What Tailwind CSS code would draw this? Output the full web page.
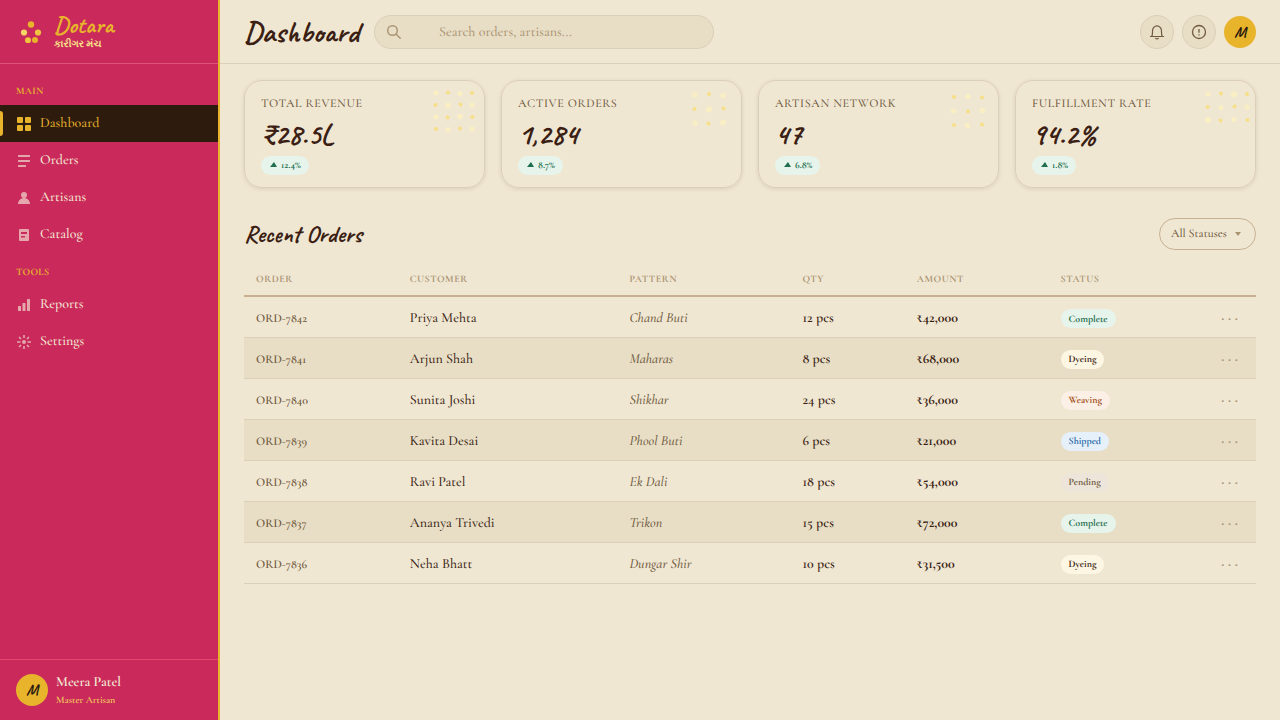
<!DOCTYPE html>
<html lang="en">
<head>
<meta charset="utf-8">
<meta name="viewport" content="width=device-width, initial-scale=1">
<title>Dotara – Dashboard</title>
<script src="https://cdn.jsdelivr.net/npm/@tailwindcss/browser@4"></script>
</head>
<body class="flex h-screen bg-[#f0e7d3] font-['Cormorant_Garamond','Liberation_Serif',serif] font-medium text-[#3b1f14] [text-rendering:geometricPrecision]">

<aside class="flex w-[220px] shrink-0 flex-col border-r-2 border-[#e8b42c] bg-[#c92a5b]">
  <div class="flex h-16 shrink-0 items-center gap-3 border-b border-[#dd5377] pl-5">
    <svg class="size-[22px]" viewBox="0 0 22 22" aria-hidden="true">
      <circle cx="11" cy="3.500" r="3.200" fill="#e8b42c"/>
      <circle cx="4" cy="11.500" r="3.100" fill="#f5d563"/>
      <circle cx="18" cy="11.500" r="3.100" fill="#efc440"/>
      <circle cx="8" cy="19.300" r="3" fill="#efc440"/>
      <circle cx="15" cy="19" r="3" fill="#e8b42c"/>
    </svg>
    <div>
      <p class="font-['Caveat',cursive] text-2xl font-bold leading-6 text-[#e8b42c]">Dotara</p>
      <p class="text-[10px] font-semibold leading-3 text-[#fbe38a]" lang="gu">કારીગર મંચ</p>
    </div>
  </div>

  <nav class="flex-1" aria-label="Main">
    <h2 class="px-4 pt-[19px] pb-1.5 text-[10px] font-bold leading-4 tracking-wide text-[#e8b42c]">MAIN</h2>
    <a href="#" aria-current="page" class="relative flex h-[37px] items-center gap-2 bg-[#2d1b0e] px-4 text-sm leading-[21px] text-[#e8b42c]">
      <span class="absolute top-1.5 left-0 h-[25px] w-[3px] rounded-r-sm bg-[#e8b42c]"></span>
      <svg class="size-4" viewBox="0 0 16 16" fill="currentColor" aria-hidden="true"><rect x="1" y="1" width="6" height="6" rx="1"/><rect x="9" y="1" width="6" height="6" rx="1"/><rect x="1" y="9" width="6" height="6" rx="1"/><rect x="9" y="9" width="6" height="6" rx="1"/></svg>
      Dashboard
    </a>
    <a href="#" class="flex h-[37px] items-center gap-2 px-4 text-sm leading-[21px] text-[#f5ead6]">
      <svg class="size-4 opacity-65" viewBox="0 0 16 16" fill="currentColor" aria-hidden="true"><rect x="2" y="2" width="12" height="2" rx=".5"/><rect x="2" y="7" width="12" height="2" rx=".5"/><rect x="2" y="12" width="8" height="2" rx=".5"/></svg>
      Orders
    </a>
    <a href="#" class="flex h-[37px] items-center gap-2 px-4 text-sm leading-[21px] text-[#f5ead6]">
      <svg class="size-4 opacity-65" viewBox="0 0 16 16" fill="currentColor" aria-hidden="true"><circle cx="8" cy="5" r="3"/><path d="M2 14c0-3.300 2.700-6 6-6s6 2.700 6 6z"/></svg>
      Artisans
    </a>
    <a href="#" class="flex h-[37px] items-center gap-2 px-4 text-sm leading-[21px] text-[#f5ead6]">
      <svg class="size-4 opacity-65" viewBox="0 0 16 16" fill="currentColor" fill-rule="evenodd" aria-hidden="true"><path d="M4 2h8a1 1 0 0 1 1 1v10a1 1 0 0 1-1 1H4a1 1 0 0 1-1-1V3a1 1 0 0 1 1-1zM5 5v2h6V5zM5 9v1.500h4V9z"/></svg>
      Catalog
    </a>
    <h2 class="px-4 pt-[11px] pb-1.5 text-[10px] font-bold leading-4 tracking-wide text-[#e8b42c]">TOOLS</h2>
    <a href="#" class="flex h-[37px] items-center gap-2 px-4 text-sm leading-[21px] text-[#f5ead6]">
      <svg class="size-4 opacity-65" viewBox="0 0 16 16" fill="currentColor" aria-hidden="true"><rect x="2" y="9" width="3" height="5" rx=".5"/><rect x="6.500" y="6" width="3" height="8" rx=".5"/><rect x="11" y="2" width="3" height="12" rx=".5"/></svg>
      Reports
    </a>
    <a href="#" class="flex h-[37px] items-center gap-2 px-4 text-sm leading-[21px] text-[#f5ead6]">
      <svg class="size-4 opacity-65" viewBox="0 0 16 16" fill="none" stroke="currentColor" stroke-width="1.600" aria-hidden="true"><circle cx="8" cy="8" r="2" fill="currentColor" stroke="none"/><path d="M8 1v3M8 12v3M1 8h3.500M11.500 8H15M3 3l2 2M11 11l2 2M3 13l2-2M11 5l2-2"/></svg>
      Settings
    </a>
  </nav>

  <div class="flex h-[61px] items-center gap-2 border-t border-[#e0486f] px-4">
    <span class="flex size-8 items-center justify-center rounded-full bg-[#e8b42c] font-['Caveat',cursive] text-base font-bold text-[#2d1b0e]">M</span>
    <div class="pt-0.5">
      <p class="text-sm font-semibold leading-[18px] text-[#f5ead6]">Meera Patel</p>
      <p class="text-[10px] font-semibold leading-4 text-[#f5cf5a]">Master Artisan</p>
    </div>
  </div>
</aside>

<div class="flex min-w-0 flex-1 flex-col">
  <header class="flex h-16 shrink-0 items-center gap-3 border-b border-[#ddd0ba] px-6">
    <h1 class="min-w-[118px] font-['Caveat',cursive] text-3xl font-bold">Dashboard</h1>
    <div class="relative w-[340px]">
      <svg class="absolute top-[9px] left-3 size-4 text-[#ab9574]" viewBox="0 0 16 16" fill="none" stroke="currentColor" stroke-width="1.500" stroke-linecap="round" aria-hidden="true"><circle cx="6.500" cy="6.500" r="4.800"/><path d="M10.200 10.200l4 4"/></svg>
      <input type="search" aria-label="Search" placeholder="Search orders, artisans..." class="block h-[34px] w-full rounded-full border border-[#dccfb8] bg-[#e8dec6] pt-0.5 pr-4 pl-16 text-sm outline-none placeholder:text-[#ab9574] [text-rendering:geometricPrecision]">
    </div>
    <div class="ml-auto flex items-center gap-2">
      <button type="button" aria-label="Notifications" class="flex size-[34px] items-center justify-center rounded-full border border-[#dccfb8] bg-[#e8dec6] text-[#6f5a40]">
        <svg class="size-4" viewBox="0 0 16 16" fill="none" stroke="currentColor" stroke-width="1.200" stroke-linecap="round" aria-hidden="true"><path d="M1.500 12.500h13M2.800 12.300C3.600 11 3.500 9.500 3.500 7a4.500 5.200 0 0 1 9 0c0 2.500-.1 4 .7 5.300M6.700 14.300a1.500 1.100 0 0 0 2.600 0"/></svg>
      </button>
      <button type="button" aria-label="Alerts" class="flex size-[34px] items-center justify-center rounded-full border border-[#dccfb8] bg-[#e8dec6] text-[#6f5a40]">
        <svg class="size-4" viewBox="0 0 16 16" fill="none" stroke="currentColor" stroke-width="1.300" aria-hidden="true"><circle cx="8" cy="8" r="6.500"/><path d="M8 5v3.800M8 10.300v1.300"/></svg>
      </button>
      <button type="button" aria-label="Account" class="flex size-8 items-center justify-center rounded-full bg-[#e8b42c] font-['Caveat',cursive] text-base font-bold text-[#2d1b0e]">M</button>
    </div>
  </header>

  <main class="flex-1 overflow-auto px-6 pt-4">
    <section class="grid grid-cols-4 gap-4" aria-label="Key figures">
      <article class="relative rounded-[18px] border border-[#dccfb8] px-4 py-3 shadow-[0_1px_4px_rgba(59,31,20,0.12)]">
        <svg class="absolute top-0 right-0 h-[60px] w-[60px]" viewBox="0 0 60 60" aria-hidden="true">
          <g fill="#faefc2"><circle cx="12" cy="12" r="2.500"/><circle cx="36" cy="12.500" r="2.500"/><circle cx="24" cy="24.500" r="2.800"/><circle cx="48" cy="24" r="2.500"/><circle cx="12" cy="36" r="2.500"/><circle cx="36" cy="35.500" r="2.800"/><circle cx="24" cy="48.500" r="2.500"/><circle cx="48" cy="48" r="2.500"/></g>
          <g fill="#f7df87"><circle cx="24" cy="11.500" r="2"/><circle cx="48" cy="12" r="2"/><circle cx="11.500" cy="24" r="2"/><circle cx="36.500" cy="23.500" r="2"/><circle cx="23.500" cy="36.500" r="2"/><circle cx="48.500" cy="36" r="2"/><circle cx="12" cy="48" r="2"/><circle cx="36" cy="47.500" r="2"/></g>
        </svg>
        <h2 class="text-xs leading-[22px] tracking-wider text-[#6f5a40]">TOTAL REVENUE</h2>
        <p class="font-['Caveat',cursive] text-3xl font-bold leading-[38px]">₹28.5L</p>
        <p class="mt-[3px] flex h-[19px] w-fit items-center gap-1 rounded-full bg-[#e6f4ec] px-2 text-[10px] font-bold text-[#1f6e4c]"><svg class="mb-0.5 h-[5px] w-2" viewBox="0 0 8 5" fill="currentColor" aria-hidden="true"><path d="M5 0l3 5H1z"/></svg>12.4%</p>
      </article>
      <article class="relative rounded-[18px] border border-[#dccfb8] px-4 py-3 shadow-[0_1px_4px_rgba(59,31,20,0.12)]">
        <svg class="absolute top-0 right-0 h-[60px] w-[60px]" viewBox="0 0 60 60" aria-hidden="true">
          <g fill="#faefc2"><circle cx="14" cy="14" r="2.800"/><circle cx="42" cy="14.500" r="2.500"/><circle cx="28" cy="28.500" r="3"/><circle cx="14" cy="42" r="2.500"/><circle cx="42" cy="41.500" r="2.800"/></g>
          <g fill="#f7df87"><circle cx="28" cy="13" r="2"/><circle cx="13.500" cy="28" r="2"/><circle cx="42.500" cy="27.500" r="2"/><circle cx="27.500" cy="42.500" r="2"/></g>
        </svg>
        <h2 class="text-xs leading-[22px] tracking-wider text-[#6f5a40]">ACTIVE ORDERS</h2>
        <p class="font-['Caveat',cursive] text-3xl font-bold leading-[38px]">1,284</p>
        <p class="mt-[3px] flex h-[19px] w-fit items-center gap-1 rounded-full bg-[#e6f4ec] px-2 text-[10px] font-bold text-[#1f6e4c]"><svg class="mb-0.5 h-[5px] w-2" viewBox="0 0 8 5" fill="currentColor" aria-hidden="true"><path d="M5 0l3 5H1z"/></svg>8.7%</p>
      </article>
      <article class="relative rounded-[18px] border border-[#dccfb8] px-4 py-3 shadow-[0_1px_4px_rgba(59,31,20,0.12)]">
        <svg class="absolute top-0 right-0 h-[60px] w-[60px]" viewBox="0 0 60 60" aria-hidden="true">
          <g fill="#faefc2"><circle cx="30" cy="15.500" r="2.600"/><circle cx="15.500" cy="30" r="2.600"/><circle cx="44.500" cy="29.500" r="2.600"/><circle cx="29.500" cy="44.500" r="2.600"/></g>
          <g fill="#f7df87"><circle cx="16" cy="16" r="2"/><circle cx="44" cy="16.500" r="2"/><circle cx="30" cy="30.500" r="2"/><circle cx="16" cy="44" r="2"/><circle cx="44" cy="43.500" r="2"/></g>
        </svg>
        <h2 class="text-xs leading-[22px] tracking-wider text-[#6f5a40]">ARTISAN NETWORK</h2>
        <p class="font-['Caveat',cursive] text-3xl font-bold leading-[38px]">47</p>
        <p class="mt-[3px] flex h-[19px] w-fit items-center gap-1 rounded-full bg-[#e6f4ec] px-2 text-[10px] font-bold text-[#1f6e4c]"><svg class="mb-0.5 h-[5px] w-2" viewBox="0 0 8 5" fill="currentColor" aria-hidden="true"><path d="M5 0l3 5H1z"/></svg>6.8%</p>
      </article>
      <article class="relative rounded-[18px] border border-[#dccfb8] px-4 py-3 shadow-[0_1px_4px_rgba(59,31,20,0.12)]">
        <svg class="absolute top-0 right-0 h-[60px] w-[60px]" viewBox="0 0 60 60" aria-hidden="true">
          <g fill="#faefc2"><circle cx="13" cy="13" r="2.500"/><circle cx="39" cy="13.500" r="2.900"/><circle cx="26" cy="26.500" r="2.500"/><circle cx="52" cy="26" r="2.500"/><circle cx="13" cy="39" r="2.900"/><circle cx="39" cy="38.500" r="2.500"/></g>
          <g fill="#f7df87"><circle cx="26" cy="12.500" r="2"/><circle cx="52" cy="13" r="2"/><circle cx="12.500" cy="26" r="2"/><circle cx="39.500" cy="25.500" r="2"/><circle cx="25.500" cy="39.500" r="2"/><circle cx="52.500" cy="39" r="2"/></g>
        </svg>
        <h2 class="text-xs leading-[22px] tracking-wider text-[#6f5a40]">FULFILLMENT RATE</h2>
        <p class="font-['Caveat',cursive] text-3xl font-bold leading-[38px]">94.2%</p>
        <p class="mt-[3px] flex h-[19px] w-fit items-center gap-1 rounded-full bg-[#e6f4ec] px-2 text-[10px] font-bold text-[#1f6e4c]"><svg class="mb-0.5 h-[5px] w-2" viewBox="0 0 8 5" fill="currentColor" aria-hidden="true"><path d="M5 0l3 5H1z"/></svg>1.8%</p>
      </article>
    </section>

    <section aria-labelledby="recent">
      <div class="mt-[30px] flex h-8 items-center justify-between">
        <h2 id="recent" class="pt-0.5 font-['Caveat',cursive] text-2xl font-bold">Recent Orders</h2>
        <div class="relative">
          <select aria-label="Filter by status" class="block h-8 w-[97px] appearance-none rounded-full border border-[#c8b193] bg-transparent pl-[11px] text-xs text-[#6f5a40] [text-rendering:geometricPrecision]">
            <option>All Statuses</option><option>Complete</option><option>Dyeing</option><option>Weaving</option><option>Shipped</option><option>Pending</option>
          </select>
          <svg class="pointer-events-none absolute top-3.5 right-3.5 h-1 w-2 text-[#a8926f]" viewBox="0 0 8 4" fill="currentColor" aria-hidden="true"><path d="M1 0h6L4 4z"/></svg>
        </div>
      </div>

      <table class="mt-3 w-full table-fixed border-collapse text-left">
        <colgroup><col class="w-[15.2%]"><col class="w-[21.7%]"><col class="w-[17.1%]"><col class="w-[11.3%]"><col class="w-[14.2%]"><col class="w-[14%]"><col></colgroup>
        <thead>
          <tr class="h-[34px] border-b-2 border-[#c8b193] text-[10px] tracking-wider text-[#ab9574] *:px-3 *:pt-0.5 *:font-bold">
            <th>ORDER</th><th>CUSTOMER</th><th>PATTERN</th><th>QTY</th><th>AMOUNT</th><th>STATUS</th><th aria-label="Actions"></th>
          </tr>
        </thead>
        <tbody class="text-sm">
          <tr class="h-[41px] border-b border-[#ddd0ba] *:px-3 *:pt-1">
            <td class="text-xs font-semibold text-[#6f5a40]">ORD-7842</td><td>Priya Mehta</td><td class="italic text-[#6f5a40]">Chand Buti</td><td class="font-semibold">12 pcs</td><td class="font-bold">₹42,000</td>
            <td><span class="flex h-[19px] w-fit items-center rounded-full bg-[#e6f4ec] px-2 text-[10px] font-bold text-[#1f6e4c]">Complete</span></td>
            <td class="text-right"><button type="button" aria-label="Actions for ORD-7842" class="px-1.5 pb-1 text-base font-bold leading-5 text-[#ab9574]">· · ·</button></td>
          </tr>
          <tr class="h-[41px] border-b border-[#ddd0ba] bg-[#e8dec6] *:px-3 *:pt-1">
            <td class="text-xs font-semibold text-[#6f5a40]">ORD-7841</td><td>Arjun Shah</td><td class="italic text-[#6f5a40]">Maharas</td><td class="font-semibold">8 pcs</td><td class="font-bold">₹68,000</td>
            <td><span class="flex h-[19px] w-fit items-center rounded-full bg-[#fdf6e3] px-2 text-[10px] font-bold text-[#3b1f14]">Dyeing</span></td>
            <td class="text-right"><button type="button" aria-label="Actions for ORD-7841" class="px-1.5 pb-1 text-base font-bold leading-5 text-[#ab9574]">· · ·</button></td>
          </tr>
          <tr class="h-[41px] border-b border-[#ddd0ba] *:px-3 *:pt-1">
            <td class="text-xs font-semibold text-[#6f5a40]">ORD-7840</td><td>Sunita Joshi</td><td class="italic text-[#6f5a40]">Shikhar</td><td class="font-semibold">24 pcs</td><td class="font-bold">₹36,000</td>
            <td><span class="flex h-[19px] w-fit items-center rounded-full bg-[#fcf0e6] px-2 text-[10px] font-bold text-[#a04a12]">Weaving</span></td>
            <td class="text-right"><button type="button" aria-label="Actions for ORD-7840" class="px-1.5 pb-1 text-base font-bold leading-5 text-[#ab9574]">· · ·</button></td>
          </tr>
          <tr class="h-[41px] border-b border-[#ddd0ba] bg-[#e8dec6] *:px-3 *:pt-1">
            <td class="text-xs font-semibold text-[#6f5a40]">ORD-7839</td><td>Kavita Desai</td><td class="italic text-[#6f5a40]">Phool Buti</td><td class="font-semibold">6 pcs</td><td class="font-bold">₹21,000</td>
            <td><span class="flex h-[19px] w-fit items-center rounded-full bg-[#e6f0fa] px-2 text-[10px] font-bold text-[#2a6ba8]">Shipped</span></td>
            <td class="text-right"><button type="button" aria-label="Actions for ORD-7839" class="px-1.5 pb-1 text-base font-bold leading-5 text-[#ab9574]">· · ·</button></td>
          </tr>
          <tr class="h-[41px] border-b border-[#ddd0ba] *:px-3 *:pt-1">
            <td class="text-xs font-semibold text-[#6f5a40]">ORD-7838</td><td>Ravi Patel</td><td class="italic text-[#6f5a40]">Ek Dali</td><td class="font-semibold">18 pcs</td><td class="font-bold">₹54,000</td>
            <td><span class="flex h-[19px] w-fit items-center rounded-full bg-[#ede5da] px-2 text-[10px] font-bold text-[#6f5a40]">Pending</span></td>
            <td class="text-right"><button type="button" aria-label="Actions for ORD-7838" class="px-1.5 pb-1 text-base font-bold leading-5 text-[#ab9574]">· · ·</button></td>
          </tr>
          <tr class="h-[41px] border-b border-[#ddd0ba] bg-[#e8dec6] *:px-3 *:pt-1">
            <td class="text-xs font-semibold text-[#6f5a40]">ORD-7837</td><td>Ananya Trivedi</td><td class="italic text-[#6f5a40]">Trikon</td><td class="font-semibold">15 pcs</td><td class="font-bold">₹72,000</td>
            <td><span class="flex h-[19px] w-fit items-center rounded-full bg-[#e6f4ec] px-2 text-[10px] font-bold text-[#1f6e4c]">Complete</span></td>
            <td class="text-right"><button type="button" aria-label="Actions for ORD-7837" class="px-1.5 pb-1 text-base font-bold leading-5 text-[#ab9574]">· · ·</button></td>
          </tr>
          <tr class="h-[41px] border-b border-[#ddd0ba] *:px-3 *:pt-1">
            <td class="text-xs font-semibold text-[#6f5a40]">ORD-7836</td><td>Neha Bhatt</td><td class="italic text-[#6f5a40]">Dungar Shir</td><td class="font-semibold">10 pcs</td><td class="font-bold">₹31,500</td>
            <td><span class="flex h-[19px] w-fit items-center rounded-full bg-[#fdf6e3] px-2 text-[10px] font-bold text-[#3b1f14]">Dyeing</span></td>
            <td class="text-right"><button type="button" aria-label="Actions for ORD-7836" class="px-1.5 pb-1 text-base font-bold leading-5 text-[#ab9574]">· · ·</button></td>
          </tr>
        </tbody>
      </table>
    </section>
  </main>
</div>
</body>
</html>
